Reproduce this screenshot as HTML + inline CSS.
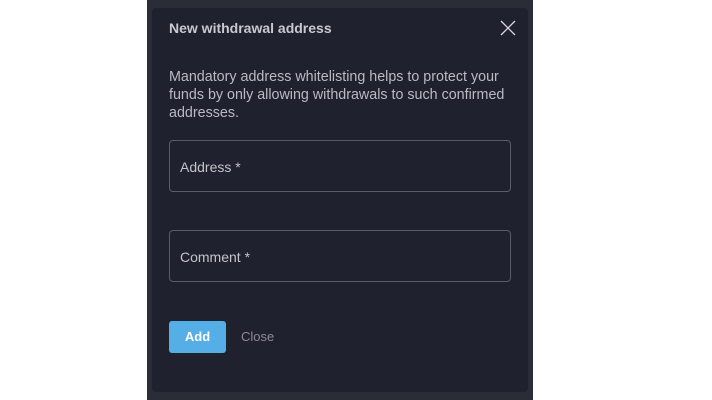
<!DOCTYPE html>
<html><head><style>
body{margin:0;width:712px;height:400px;background:#fff;position:relative;overflow:hidden;font-family:"Liberation Sans",sans-serif}
.outer{position:absolute;left:147px;top:0;width:386px;height:400px;background:#2a2c37}
.modal{position:absolute;left:152px;top:8px;width:376px;height:384px;background:#1f212e;border-radius:4px}
.title{position:absolute;left:169px;top:20px;font-size:14px;font-weight:bold;color:#c8c9cf}
.desc{position:absolute;left:169px;top:68px;width:350px;font-size:14.3px;line-height:18px;color:#b9bac3}
.field{position:absolute;left:169px;width:342px;height:52px;border:1px solid #5a5c68;border-radius:4px;box-sizing:border-box}
.field span{position:absolute;left:10px;top:18px;font-size:14px;color:#c3c4cb}
.add{position:absolute;left:169px;top:321px;width:57px;height:32px;background:#56aee7;border-radius:3px;color:#fff;font-size:13px;font-weight:bold;text-align:center;line-height:32px}
.close{position:absolute;left:241px;top:329px;font-size:13px;color:#8a8b95}
</style></head><body>
<div class="outer"></div><div class="modal"></div>
<div class="title">New withdrawal address</div>
<svg style="position:absolute;left:500px;top:20px" width="16" height="16"><path d="M1 1L15 15M15 1L1 15" stroke="#d8d9de" stroke-width="1.3"/></svg>
<div class="desc">Mandatory address whitelisting helps to protect your funds by only allowing withdrawals to such confirmed addresses.</div>
<div class="field" style="top:140px"><span>Address *</span></div>
<div class="field" style="top:230px"><span>Comment *</span></div>
<div class="add">Add</div>
<div class="close">Close</div>
</body></html>
